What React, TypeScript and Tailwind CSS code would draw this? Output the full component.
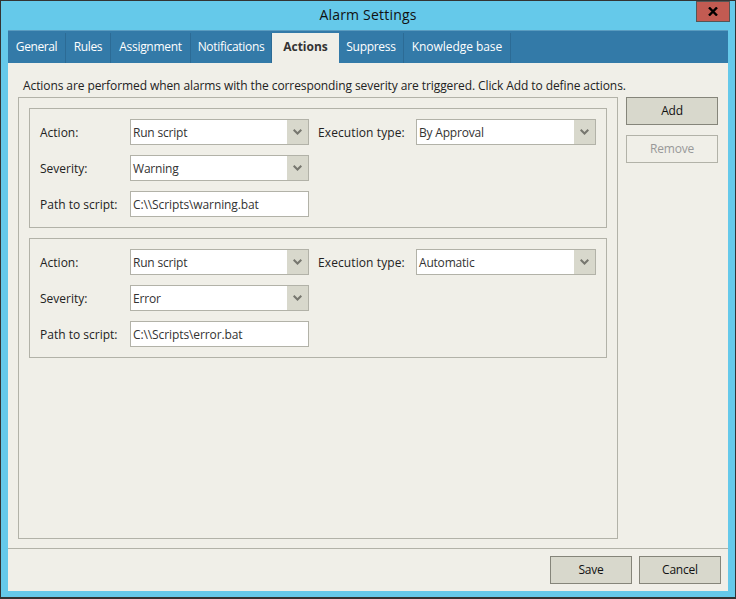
const font = { fontFamily: '"Open Sans", "Noto Sans", sans-serif' };

const tabs = [
  { name: "General", w: "w-[58px]", track: "tracking-[-0.4px]" },
  { name: "Rules", w: "w-[45px]", track: "tracking-[-0.4px]" },
  { name: "Assignment", w: "w-[80px]", track: "tracking-[-0.3px]" },
  { name: "Notifications", w: "w-[81px]", track: "tracking-[-0.3px]" },
  { name: "Actions", w: "w-[67px]", active: true },
  { name: "Suppress", w: "w-[65px]", track: "tracking-[-0.3px]" },
  { name: "Knowledge base", w: "w-[107px]", track: "tracking-[-0.05px]" },
];

function Combo({ value, width }: { value: string; width: string }) {
  return (
    <div className={`${width} h-[26px] flex bg-white border border-[#b2b2a8]`}>
      <div className="flex-1 pl-[2px] pt-[1px] leading-[24px] text-[#333] tracking-[-0.2px]">{value}</div>
      <div className="w-[21px] bg-[#d8d8cc] flex items-center justify-center">
        <svg width="9" height="6" viewBox="0 0 9 6">
          <path d="M0.7 0.7 L4.5 4.5 L8.3 0.7" fill="none" stroke="#77776f" strokeWidth="2" />
        </svg>
      </div>
    </div>
  );
}

function ActionGroup({ exec, severity, path }: { exec: string; severity: string; path: string }) {
  return (
    <div className="h-[120px] border border-[#b2b2a8] pt-[10px] pl-[10px] flex flex-col gap-[10px]">
      <div className="flex items-center">
        <div className="w-[90px] pt-[1px]">Action:</div>
        <Combo value="Run script" width="w-[179px]" />
        <div className="w-[107px] pl-[9px] pt-[1px] whitespace-nowrap tracking-[0.1px]">Execution type:</div>
        <Combo value={exec} width="w-[180px]" />
      </div>
      <div className="flex items-center">
        <div className="w-[90px] pt-[1px]">Severity:</div>
        <Combo value={severity} width="w-[179px]" />
      </div>
      <div className="flex items-center">
        <div className="w-[90px] pt-[1px] whitespace-nowrap">Path to script:</div>
        <div className="w-[179px] h-[26px] bg-white border border-[#b2b2a8] pl-[2px] pt-[1px] leading-[24px] text-[#333] tracking-[-0.1px]">
          {path}
        </div>
      </div>
    </div>
  );
}

export default function App() {
  return (
    <div
      style={font}
      className="w-[736px] h-[599px] bg-[#65c9ea] border border-[#333] border-b-2 flex flex-col text-[12px] text-[#222] overflow-hidden"
    >
      {/* Title bar */}
      <div className="h-[29px] shrink-0 relative flex justify-center items-center text-[14px] text-[#111] pb-[2px] tracking-[0.2px]">
        Alarm Settings
        <div className="absolute right-[5px] top-0 w-[34px] h-[21px] bg-[#c25b52] border border-[#555] flex items-center justify-center">
          <svg width="10" height="9" viewBox="0 0 10 9">
            <path d="M1 0.5 L9 8.5 M9 0.5 L1 8.5" stroke="#000" strokeWidth="2.4" />
          </svg>
        </div>
      </div>

      <div className="ml-[7px] w-[720px] h-[561px] bg-[#f0efe8] flex flex-col">
        {/* Tabs */}
        <div className="h-[33px] shrink-0 bg-[#337aa8] border-t border-[#5a9cc0] pt-[2px] flex">
          {tabs.map((t) =>
            t.active ? (
              <div key={t.name} className={`${t.w} bg-[#f0efe8] text-[#333] font-bold text-center leading-[28px]`}>
                {t.name}
              </div>
            ) : (
              <div
                key={t.name}
                className={`${t.w} ${t.track} text-white text-center leading-[28px] border-r border-[#2c6b95]`}
              >
                {t.name}
              </div>
            ),
          )}
        </div>

        <div className="flex-1 px-[10px] pt-[14px]">
          <div className="ml-[5px] leading-[18px] tracking-[-0.09px] whitespace-nowrap">
            Actions are performed when alarms with the corresponding severity are triggered. Click Add to define actions.
          </div>
          <div className="flex gap-[8px] mt-[2px]">
            <div className="w-[600px] h-[442px] border border-[#b2b2a8] p-[10px] flex flex-col gap-[10px]">
              <ActionGroup exec="By Approval" severity="Warning" path="C:\\Scripts\warning.bat" />
              <ActionGroup exec="Automatic" severity="Error" path="C:\\Scripts\error.bat" />
            </div>
            <div className="flex flex-col gap-[10px]">
              <button className="w-[92px] h-[28px] bg-[#d8d8cc] border border-[#85857a] text-[#111] tracking-[-0.2px]">
                Add
              </button>
              <button className="w-[92px] h-[28px] border border-[#b2b2a8] text-[#999] tracking-[-0.2px]">Remove</button>
            </div>
          </div>
        </div>

        {/* Footer */}
        <div className="h-[43px] shrink-0 border-t border-[#b2b2a8] pt-[7px] pr-[7px] flex justify-end gap-[7px]">
          <button className="w-[82px] h-[28px] bg-[#d8d8cc] border border-[#85857a] text-[#111] tracking-[-0.2px]">
            Save
          </button>
          <button className="w-[82px] h-[28px] bg-[#d8d8cc] border border-[#85857a] text-[#111] tracking-[-0.2px]">
            Cancel
          </button>
        </div>
      </div>
    </div>
  );
}
